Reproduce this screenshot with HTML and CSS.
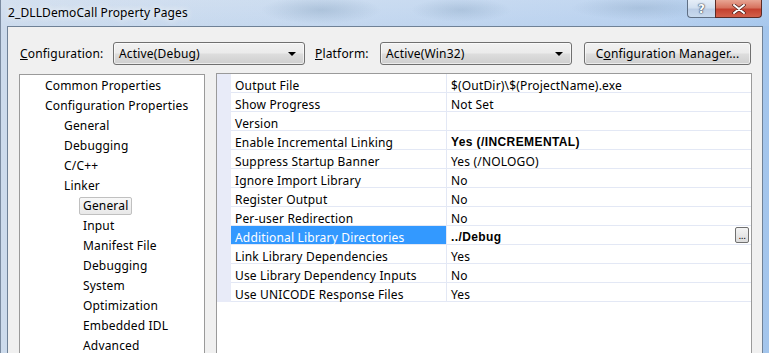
FILE: index.html
```html
<!DOCTYPE html>
<html>
<head>
<meta charset="utf-8">
<link rel="stylesheet" href="styles.css">
</head>
<body>
<div class="window">
  <div class="titlebar">
    <span class="title">2_DLLDemoCall Property Pages</span>
    <div class="caption-btns">
      <span class="cap-btn cap-help">?</span>
      <span class="cap-btn cap-close">
        <svg width="14" height="10" viewBox="0 0 14 10"><path d="M2 1 L12 9 M12 1 L2 9" stroke="#4a1d18" stroke-width="3.4" stroke-linecap="round"/><path d="M2 1 L12 9 M12 1 L2 9" stroke="#ffffff" stroke-width="2" stroke-linecap="round"/></svg>
      </span>
    </div>
  </div>
  <div class="client">
    <div class="config-row">
      <span class="lbl lbl-config"><u>C</u>onfiguration:</span>
      <div class="combo"><span class="combo-text">Active(Debug)</span><span class="arrow"></span></div>
      <span class="lbl lbl-platform"><u>P</u>latform:</span>
      <div class="combo"><span class="combo-text">Active(Win32)</span><span class="arrow"></span></div>
      <span class="cfg-btn">C<u>o</u>nfiguration Manager...</span>
    </div>
    <div class="panels">
      <div class="tree">
        <div class="item l0">Common Properties</div>
        <div class="item l0">Configuration Properties</div>
        <div class="item l1">General</div>
        <div class="item l1">Debugging</div>
        <div class="item l1">C/C++</div>
        <div class="item l1">Linker</div>
        <div class="item l2"><span class="sel">General</span></div>
        <div class="item l2">Input</div>
        <div class="item l2">Manifest File</div>
        <div class="item l2">Debugging</div>
        <div class="item l2">System</div>
        <div class="item l2">Optimization</div>
        <div class="item l2">Embedded IDL</div>
        <div class="item l2">Advanced</div>
      </div>
      <div class="grid">
        <div class="row"><span class="strip"></span><span class="name">Output File</span><span class="val">$(OutDir)\$(ProjectName).exe</span></div>
        <div class="row"><span class="strip"></span><span class="name">Show Progress</span><span class="val">Not Set</span></div>
        <div class="row"><span class="strip"></span><span class="name">Version</span><span class="val"></span></div>
        <div class="row"><span class="strip"></span><span class="name">Enable Incremental Linking</span><span class="val bold">Yes (/INCREMENTAL)</span></div>
        <div class="row"><span class="strip"></span><span class="name">Suppress Startup Banner</span><span class="val">Yes (/NOLOGO)</span></div>
        <div class="row"><span class="strip"></span><span class="name">Ignore Import Library</span><span class="val">No</span></div>
        <div class="row"><span class="strip"></span><span class="name">Register Output</span><span class="val">No</span></div>
        <div class="row"><span class="strip"></span><span class="name">Per-user Redirection</span><span class="val">No</span></div>
        <div class="row selected"><span class="strip"></span><span class="name">Additional Library Directories</span><span class="val bold">../Debug<span class="ellipsis">...</span></span></div>
        <div class="row"><span class="strip"></span><span class="name">Link Library Dependencies</span><span class="val">Yes</span></div>
        <div class="row"><span class="strip"></span><span class="name">Use Library Dependency Inputs</span><span class="val">No</span></div>
        <div class="row"><span class="strip"></span><span class="name">Use UNICODE Response Files</span><span class="val">Yes</span></div>
      </div>
    </div>
  </div>
</div>
</body>
</html>
```

FILE: styles.css
```css
* { box-sizing: border-box; }
html, body { margin: 0; padding: 0; }
body {
  width: 769px;
  height: 353px;
  overflow: hidden;
  background: #c6d8ee;
  font-family: "Noto Sans", "Open Sans", sans-serif;
  font-size: 12px;
  letter-spacing: 0.17px;
  color: #000;
}
.window {
  width: 769px;
  height: 353px;
  display: flex;
  flex-direction: column;
  border-left: 1px solid #7b8ba0;
  background: linear-gradient(to right, #cddbec 0, #c4d7ee 40%, #b6cfee 85%, #a3c5ec 100%);
  overflow: hidden;
}
.titlebar {
  height: 26px;
  flex: none;
  display: flex;
  align-items: flex-start;
  background:
    radial-gradient(ellipse 60px 14px at 320px 10px, rgba(120,150,180,0.35), rgba(120,150,180,0) 100%),
    radial-gradient(ellipse 50px 12px at 460px 10px, rgba(120,150,180,0.3), rgba(120,150,180,0) 100%),
    radial-gradient(ellipse 70px 12px at 640px 8px, rgba(120,150,180,0.3), rgba(120,150,180,0) 100%),
    linear-gradient(to bottom, rgba(255,255,255,0.15), rgba(200,222,245,0.1));
}
.title {
  padding-left: 7px;
  padding-top: 5px;
  font-size: 12px;
  line-height: 16px;
  letter-spacing: 0.1px;
  color: #000;
  text-shadow: 0 0 6px rgba(255,255,255,0.9), 0 0 10px rgba(255,255,255,0.7);
}
.caption-btns {
  margin-left: auto;
  margin-right: 7px;
  display: flex;
}
.cap-btn {
  height: 18px;
  display: flex;
  align-items: center;
  justify-content: center;
  border: 1px solid #5f6f84;
  border-top: none;
}
.cap-help {
  width: 28px;
  border-radius: 0 0 0 4px;
  border-right: none;
  background: linear-gradient(to bottom, #e6eef8 0, #d2e0f0 45%, #bccee6 55%, #c9daee 100%);
  color: #fff;
  font-family: "DejaVu Sans", sans-serif;
  font-weight: bold;
  font-size: 12px;
  text-shadow: 0 0 1px #3a4a60, 0 0 1px #3a4a60, 0 0 2px #3a4a60;
}
.cap-close {
  width: 47px;
  border-radius: 0 0 4px 0;
  border-color: #5a2b26;
  background: linear-gradient(to bottom, #e8a593 0, #d7735f 45%, #c4412f 55%, #d2604a 100%);
}
.client {
  flex: 1;
  margin: 0 6px 0 6px;
  border: 1px solid #6f8196;
  border-bottom: none;
  background: #f0f0f0;
  display: flex;
  flex-direction: column;
}
.config-row {
  display: flex;
  align-items: center;
  padding: 15px 0 0 12px;
  height: 38px;
}
.lbl { line-height: 23px; }
.lbl-config { width: 93px; }
.lbl-platform { width: 65px; margin-left: 10px; }
.combo {
  width: 192px;
  height: 23px;
  border: 1px solid #707070;
  border-radius: 3px;
  background: linear-gradient(to bottom, #f2f2f2 0, #ebebeb 48%, #dddddd 52%, #cfcfcf 100%);
  display: flex;
  align-items: center;
  padding-left: 5px;
  box-shadow: inset 0 0 0 1px rgba(255,255,255,0.6);
}
.combo-text { flex: 1; }
.arrow {
  width: 0; height: 0;
  margin-right: 8px;
  border-left: 4px solid transparent;
  border-right: 4px solid transparent;
  border-top: 4px solid #000;
}
.cfg-btn {
  margin-left: 12px;
  width: 167px;
  height: 23px;
  border: 1px solid #707070;
  border-radius: 3px;
  background: linear-gradient(to bottom, #f2f2f2 0, #ebebeb 48%, #dddddd 52%, #cfcfcf 100%);
  box-shadow: inset 0 0 0 1px rgba(255,255,255,0.6);
  display: flex;
  align-items: center;
  justify-content: center;
}
.panels {
  display: flex;
  align-items: flex-start;
  margin-top: 8px;
  flex: 1;
}
.tree {
  margin-top: 1px;
  margin-left: 11px;
  width: 186px;
  height: 300px;
  padding-top: 1px;
  border: 1px solid #9a9a9a;
  background: #fff;
}
.item {
  height: 20px;
  line-height: 20px;
  white-space: nowrap;
}
.l0 { padding-left: 25px; }
.l1 { padding-left: 44px; }
.l2 { padding-left: 63px; }
.sel {
  display: inline-block;
  margin-left: -4px;
  line-height: 16px;
  padding: 0 3px;
  border: 1px solid #c0c0c0;
  border-radius: 2px;
  background: linear-gradient(to bottom, #f8f8f8, #e8e8e8);
}
.grid {
  margin-left: 11px;
  width: 536px;
  height: 300px;
  border: 1px solid #9a9a9a;
  background: #fff;
}
.row {
  display: flex;
  height: 19px;
}
.strip {
  width: 14px;
  flex: none;
  background: #e8ebf8;
}
.name, .val {
  height: 19px;
  padding: 4px 0 0 4px;
  line-height: 15px;
  border-bottom: 1px solid #e3e8f5;
  white-space: nowrap;
}
.name {
  width: 216px;
  flex: none;
  border-right: 1px solid #e3e8f5;
}
.val {
  flex: 1;
  display: flex;
}
.bold {
  font-family: "Liberation Sans", Arial, sans-serif;
  font-weight: bold;
  font-size: 12px;
  letter-spacing: 0.4px;
}
.selected .name {
  background: #3399ff;
  color: #fff;
}
.ellipsis {
  margin-left: auto;
  margin-right: 2px;
  margin-top: -3px;
  width: 14px;
  height: 16px;
  border: 1px solid #707070;
  border-radius: 2px;
  background: linear-gradient(to bottom, #f4f4f4, #dcdcdc);
  font-family: "Liberation Sans", Arial, sans-serif;
  font-weight: normal;
  font-size: 10px;
  line-height: 16px;
  text-align: center;
  letter-spacing: -0.5px;
}
```
